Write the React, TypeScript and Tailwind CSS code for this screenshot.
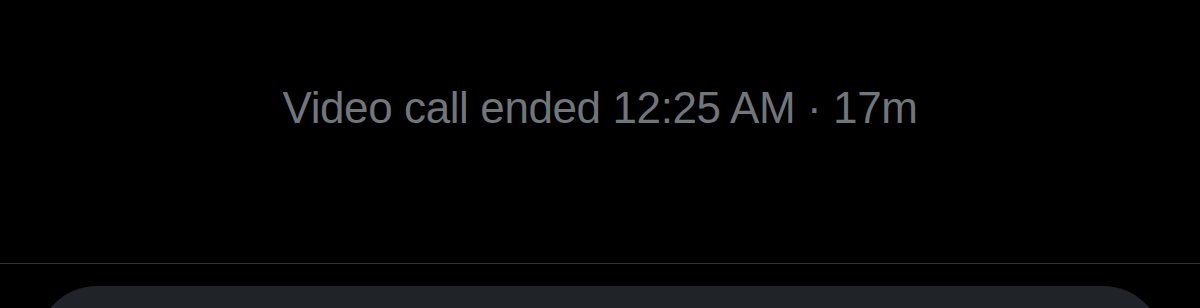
export default function App() {
  return (
    <div className="w-full h-[308px] bg-black overflow-hidden flex flex-col">
      {/* call ended notice */}
      <div className="h-[263px] shrink-0 pt-[86px] flex justify-center">
        <p
          className="text-[44px] leading-[44px] text-[#71767b] tracking-[-0.4px]"
          style={{ fontFamily: '"Liberation Sans", Arial, sans-serif' }}
        >
          Video call ended 12:25 AM · 17m
        </p>
      </div>

      <div className="h-px shrink-0 bg-[#2f3336]" />

      {/* composer */}
      <div className="pt-[22px] px-[37px] shrink-0">
        <div className="h-[120px] rounded-[64px] bg-[#202327]" />
      </div>
    </div>
  );
}
